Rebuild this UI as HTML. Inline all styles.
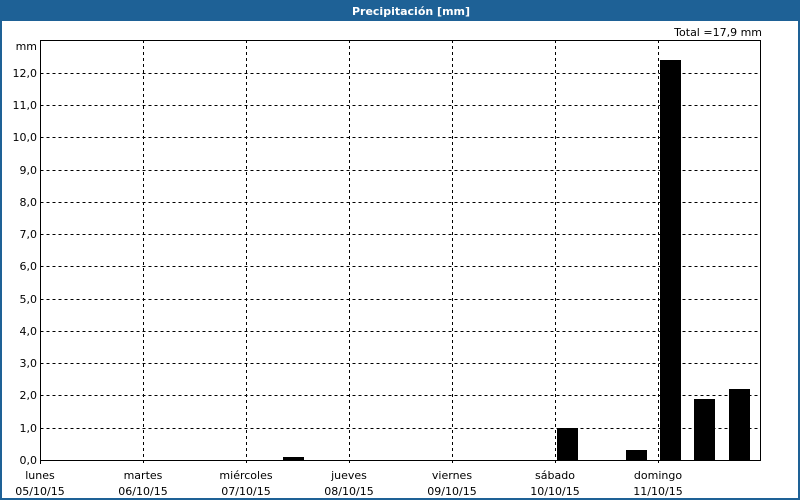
<!DOCTYPE html>
<html><head><meta charset="utf-8"><style>
html,body{margin:0;padding:0;width:800px;height:500px;overflow:hidden;background:#fff}
svg{display:block}
text{font-family:"DejaVu Sans","Liberation Sans",sans-serif;font-size:11px;fill:#000}
</style></head><body>
<svg width="800" height="500" viewBox="0 0 800 500" xmlns="http://www.w3.org/2000/svg">
<rect x="0" y="0" width="800" height="500" fill="#1e6196"/>
<rect x="2" y="21" width="796" height="477" fill="#fff"/>
<text x="411" y="15" text-anchor="middle" style="font-weight:bold;fill:#fff;font-size:11px">Precipitación [mm]</text>
<text x="762" y="36" text-anchor="end">Total =17,9 mm</text>
<g stroke="#000" stroke-width="1" stroke-dasharray="3,3" fill="none">
<path d="M40.5 73.5H760M40.5 105.5H760M40.5 137.5H760M40.5 170.5H760M40.5 202.5H760M40.5 234.5H760M40.5 266.5H760M40.5 299.5H760M40.5 331.5H760M40.5 363.5H760M40.5 395.5H760M40.5 428.5H760"/>
<path d="M143.5 40V463M246.5 40V463M349.5 40V463M452.5 40V463M555.5 40V463M658.5 40V463"/>
</g>
<path d="M40.5 40.5H760.5V460.5H40.5Z" stroke="#000" fill="none"/>
<path d="M40.5 460V464" stroke="#000"/>
<g fill="#000">
<rect x="283" y="457" width="21" height="4"/>
<rect x="557" y="428" width="21" height="33"/>
<rect x="626" y="450" width="21" height="11"/>
<rect x="660" y="60" width="21" height="401"/>
<rect x="694" y="399" width="21" height="62"/>
<rect x="729" y="389" width="21" height="72"/>
</g>
<g text-anchor="end">
<text x="37" y="50">mm</text>
<text x="37" y="77">12,0</text>
<text x="37" y="109">11,0</text>
<text x="37" y="141">10,0</text>
<text x="37" y="174">9,0</text>
<text x="37" y="206">8,0</text>
<text x="37" y="238">7,0</text>
<text x="37" y="270">6,0</text>
<text x="37" y="303">5,0</text>
<text x="37" y="335">4,0</text>
<text x="37" y="367">3,0</text>
<text x="37" y="399">2,0</text>
<text x="37" y="432">1,0</text>
<text x="37" y="464">0,0</text>
</g>
<g text-anchor="middle">
<text x="40" y="479">lunes</text><text x="40" y="495">05/10/15</text>
<text x="143" y="479">martes</text><text x="143" y="495">06/10/15</text>
<text x="246" y="479">miércoles</text><text x="246" y="495">07/10/15</text>
<text x="349" y="479">jueves</text><text x="349" y="495">08/10/15</text>
<text x="452" y="479">viernes</text><text x="452" y="495">09/10/15</text>
<text x="555" y="479">sábado</text><text x="555" y="495">10/10/15</text>
<text x="658" y="479">domingo</text><text x="658" y="495">11/10/15</text>
</g>
</svg>
</body></html>
